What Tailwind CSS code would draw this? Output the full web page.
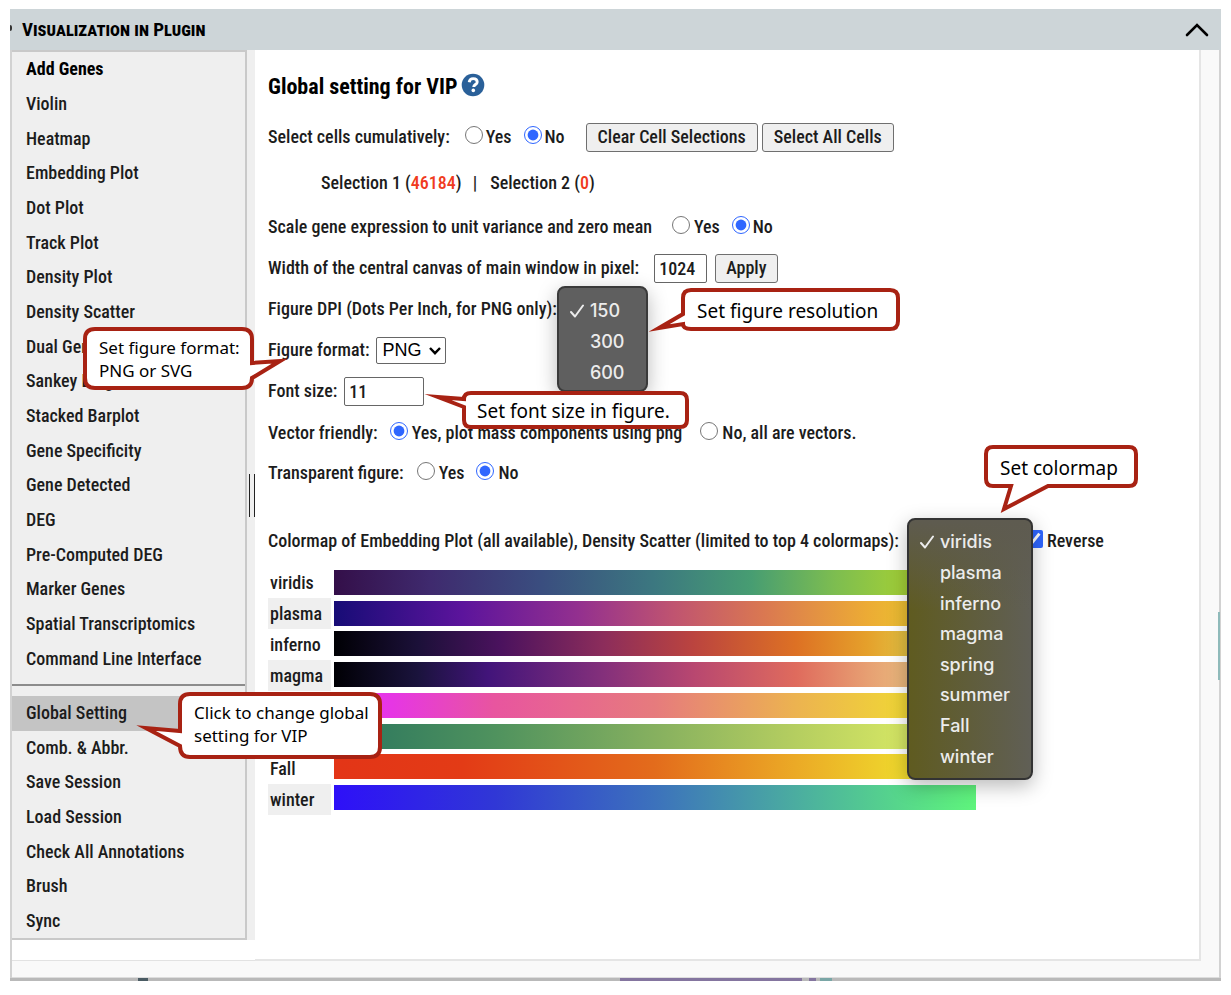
<!DOCTYPE html>
<html lang="en">
<head>
<meta charset="utf-8">
<title>Visualization in Plugin</title>
<script src="https://cdn.jsdelivr.net/npm/@tailwindcss/browser@4"></script>
</head>
<body class="bg-white text-[#1c1c1c] font-['Roboto_Condensed','Roboto',sans-serif] text-[18px] leading-6 font-medium">
<div class="relative px-[10px] pt-[9px] pb-3">
  <div class="border-x-2 border-[#d2d2d2]">
    <header class="-mx-[2px] flex h-[41px] items-center justify-between bg-[#cdd5d8] pr-3 pl-3">
      <h1 class="text-[19px] font-bold text-black [font-variant-caps:small-caps]">Visualization in Plugin</h1>
      <button type="button" aria-label="Collapse" class="h-6 w-6">
        <svg viewBox="0 0 24 24" class="h-6 w-6" fill="none" stroke="#000" stroke-width="2.600" stroke-linecap="round" stroke-linejoin="miter"><path d="M2 17 12 7 22 17"/></svg>
      </button>
    </header>
    <div class="flex bg-[#f9f9f9] pr-[18px]">
      <div class="w-[243px] shrink-0 border-b border-[#e2e2e2] bg-white pb-[20px]">
        <div class="flex bg-[#efefef]">
          <nav class="w-[235px] border-r-2 border-b-2 border-t-2 border-[#c9c9c9]">
            <div class="flex h-[624px] flex-col [&>a]:flex [&>a]:flex-1 [&>a]:items-center [&>a]:pl-[14px]">
              <a href="#" class="font-bold text-black">Add Genes</a>
              <a href="#">Violin</a>
              <a href="#">Heatmap</a>
              <a href="#">Embedding Plot</a>
              <a href="#">Dot Plot</a>
              <a href="#">Track Plot</a>
              <a href="#">Density Plot</a>
              <a href="#">Density Scatter</a>
              <a href="#">Dual Gene</a>
              <a href="#">Sankey Diagram</a>
              <a href="#">Stacked Barplot</a>
              <a href="#">Gene Specificity</a>
              <a href="#">Gene Detected</a>
              <a href="#">DEG</a>
              <a href="#">Pre-Computed DEG</a>
              <a href="#">Marker Genes</a>
              <a href="#">Spatial Transcriptomics</a>
              <a href="#">Command Line Interface</a>
            </div>
            <hr class="mt-2 mb-[10px] border-t-2 border-[#8c8c8c]">
            <div class="flex h-[242px] flex-col [&>a]:flex [&>a]:flex-1 [&>a]:items-center [&>a]:pl-[14px]">
              <a href="#" class="bg-[#c4c4c4]">Global Setting</a>
              <a href="#">Comb. &amp; Abbr.</a>
              <a href="#">Save Session</a>
              <a href="#">Load Session</a>
              <a href="#">Check All Annotations</a>
              <a href="#">Brush</a>
              <a href="#">Sync</a>
            </div>
          </nav>
          <div class="flex flex-1 items-center justify-end">
            <div class="h-[43px] w-[6px] border-x border-[#222]"></div>
          </div>
        </div>
      </div>
      <main class="min-w-0 flex-1 border-r-2 border-b-2 border-[#e5e5e5] bg-white pt-[17px] pl-[13px] whitespace-nowrap">
        <div class="flex h-10 items-center gap-1">
          <h2 class="text-[22px] font-bold text-black">Global setting for VIP</h2>
          <svg viewBox="0 0 24 24" class="mb-1 h-6 w-6" role="img" aria-label="Help"><circle cx="12" cy="12" r="11.300" fill="#2a6099"/><path d="M8.200 9.300c.3-2.400 1.900-3.700 4-3.700 2.300 0 4 1.300 4 3.300 0 2.500-3.500 2.700-3.500 5.200" fill="none" stroke="#fff" stroke-width="2.900"/><circle cx="12.300" cy="17.400" r="1.800" fill="#fff"/></svg>
        </div>
        <div class="flex h-[60px] items-center">
          <span>Select cells cumulatively:</span>
          <input id="c1" name="cum" type="radio" class="mb-1 ml-[15px] h-[18px] w-[18px] accent-[#2f66ff]"><label for="c1" class="ml-[3px]">Yes</label>
          <input id="c2" name="cum" type="radio" checked class="mb-1 ml-3 h-[18px] w-[18px] accent-[#2f66ff]"><label for="c2" class="ml-[3px]">No</label>
          <button type="button" class="ml-[21px] h-[29px] rounded-[3px] border border-[#6f6f6f] bg-[#efefef] px-[11px]">Clear Cell Selections</button>
          <button type="button" class="ml-1 h-[29px] rounded-[3px] border border-[#6f6f6f] bg-[#efefef] px-[11px]">Select All Cells</button>
        </div>
        <div class="flex h-8 items-center pl-[53px]">
          <span>Selection 1 (<span class="text-[#f03a20]">46184</span>)</span><span class="mx-[11px]">|</span><span class="ml-[2px]">Selection 2 (<span class="text-[#f03a20]">0</span>)</span>
        </div>
        <div class="mt-2 flex h-10 items-center">
          <span>Scale gene expression to unit variance and zero mean</span>
          <input id="s1" name="scale" type="radio" class="mb-1 ml-5 h-[18px] w-[18px] accent-[#2f66ff]"><label for="s1" class="ml-1">Yes</label>
          <input id="s2" name="scale" type="radio" checked class="mb-1 ml-3 h-[18px] w-[18px] accent-[#2f66ff]"><label for="s2" class="ml-[3px]">No</label>
        </div>
        <div class="flex h-[42px] items-center">
          <label for="w">Width of the central canvas of main window in pixel:</label>
          <input id="w" type="text" value="1024" class="ml-[15px] h-[29px] w-[53px] rounded-[2px] border border-[#666] bg-white px-1">
          <button type="button" class="ml-2 h-[29px] rounded-[3px] border border-[#6f6f6f] bg-[#efefef] px-[10px]">Apply</button>
        </div>
        <div class="flex h-10 items-center">
          <label for="dpi">Figure DPI (Dots Per Inch, for PNG only):</label>
          <div class="relative h-6">
            <select id="dpi" class="h-6 w-[70px] rounded-[2px] border border-[#666] bg-white"><option>150</option><option>300</option><option>600</option></select>
            <ul role="listbox" aria-label="Figure DPI" class="absolute -top-[11px] left-0 z-10 h-[106px] w-[91px] rounded-lg border-2 border-[#3a3a3a] bg-[#5f5f5f] pt-[7px] font-['Inter',sans-serif] text-[18px] leading-[31px] font-medium text-[#ececec] shadow-[0_6px_20px_rgba(0,0,0,0.28)]">
              <li role="option" aria-selected="true" class="flex items-center"><svg viewBox="0 0 14 14" class="ml-[11px] h-[14px] w-[14px]" fill="none" stroke="#ececec" stroke-width="2" stroke-linecap="round" stroke-linejoin="round"><path d="M1 8 5 12.500 13 1.500"/></svg><span class="ml-[6px]">150</span></li>
              <li role="option" class="pl-[31px]">300</li>
              <li role="option" class="pl-[31px]">600</li>
            </ul>
          </div>
        </div>
        <div class="flex h-[42px] items-center">
          <label for="fmt">Figure format:</label>
          <div class="relative ml-[6px]">
            <select id="fmt" class="block h-[27px] w-[70px] appearance-none rounded-[2px] border border-[#666] bg-white pl-[6px] font-['Liberation_Sans',sans-serif] text-[18px] leading-6 font-normal text-black"><option>PNG</option><option>SVG</option></select>
            <svg viewBox="0 0 12 8" class="pointer-events-none absolute top-[10px] right-[5px] h-2 w-3" fill="none" stroke="#000" stroke-width="2.400"><path d="M1 1 6 6.200 11 1"/></svg>
          </div>
        </div>
        <div class="flex h-10 items-center">
          <label for="fs">Font size:</label>
          <input id="fs" type="text" value="11" class="ml-[7px] h-[29px] w-[80px] rounded-[2px] border border-[#666] bg-white px-1">
        </div>
        <div class="flex h-[43px] items-center">
          <span>Vector friendly:</span>
          <input id="v1" name="vec" type="radio" checked class="mb-1 ml-3 h-[18px] w-[18px] accent-[#2f66ff]"><label for="v1" class="ml-1">Yes, plot mass components using png</label>
          <input id="v2" name="vec" type="radio" class="mb-1 ml-[18px] h-[18px] w-[18px] accent-[#2f66ff]"><label for="v2" class="ml-1">No, all are vectors.</label>
        </div>
        <div class="flex h-[38px] items-center">
          <span>Transparent figure:</span>
          <input id="t1" name="tr" type="radio" class="mb-1 ml-[13px] h-[18px] w-[18px] accent-[#2f66ff]"><label for="t1" class="ml-1">Yes</label>
          <input id="t2" name="tr" type="radio" checked class="mb-1 ml-3 h-[18px] w-[18px] accent-[#2f66ff]"><label for="t2" class="ml-1">No</label>
        </div>
        <div class="mt-[29px] flex h-10 items-center">
          <label for="cm">Colormap of Embedding Plot (all available), Density Scatter (limited to top 4 colormaps):</label>
          <div class="relative ml-2 h-6">
            <select id="cm" class="h-6 w-[110px] rounded-[2px] border border-[#666] bg-white"><option>viridis</option></select>
            <ul role="listbox" aria-label="Colormap" class="absolute -top-[11px] left-0 z-10 flex h-[262px] w-[126px] flex-col rounded-lg border-2 border-[#333] bg-[linear-gradient(to_bottom,#5e5b50,#5e5b5000_35%),linear-gradient(to_right,#5f5b20,#605f56)] pt-[7px] pb-[6px] font-['Inter',sans-serif] text-[18px] leading-[30px] font-medium text-[#ececec] shadow-[0_6px_20px_rgba(0,0,0,0.28)] [&>li]:flex [&>li]:flex-1 [&>li]:items-center">
              <li role="option" aria-selected="true"><svg viewBox="0 0 14 14" class="ml-[11px] h-[14px] w-[14px]" fill="none" stroke="#ececec" stroke-width="2" stroke-linecap="round" stroke-linejoin="round"><path d="M1 8 5 12.500 13 1.500"/></svg><span class="ml-[6px]">viridis</span></li>
              <li role="option" class="pl-[31px]">plasma</li>
              <li role="option" class="pl-[31px]">inferno</li>
              <li role="option" class="pl-[31px]">magma</li>
              <li role="option" class="pl-[31px]">spring</li>
              <li role="option" class="pl-[31px]">summer</li>
              <li role="option" class="pl-[31px]">Fall</li>
              <li role="option" class="pl-[31px]">winter</li>
            </ul>
          </div>
          <input id="rev" type="checkbox" checked class="mb-1 ml-2 h-[18px] w-[18px] accent-[#2f66ff]"><label for="rev" class="ml-1">Reverse</label>
        </div>
        <div class="mt-[6px] flex items-start gap-[3px]">
          <table class="w-[63px] border-collapse">
            <tr class="h-[31px]"><td class="pl-[2px]">viridis</td></tr>
            <tr class="h-[31px] bg-[#efefef]"><td class="pl-[2px]">plasma</td></tr>
            <tr class="h-[31px]"><td class="pl-[2px]">inferno</td></tr>
            <tr class="h-[31px] bg-[#efefef]"><td class="pl-[2px]">magma</td></tr>
            <tr class="h-[31px]"><td class="pl-[2px]">spring</td></tr>
            <tr class="h-[31px] bg-[#efefef]"><td class="pl-[2px]">summer</td></tr>
            <tr class="h-[31px]"><td class="pl-[2px]">Fall</td></tr>
            <tr class="h-[31px] bg-[#efefef]"><td class="pl-[2px]">winter</td></tr>
          </table>
          <div class="mt-[3px] flex h-[240px] w-[642px] flex-col justify-between [&>div]:h-[25px]">
            <div class="bg-[linear-gradient(to_right,#340f49,#3f2a6e_15%,#3a4d7f_32%,#3c7880_50%,#479d72_65%,#7dbd50_78%,#a2cf37_89%,#f5e52c)]"></div>
            <div class="bg-[linear-gradient(to_right,#170c76,#5c149c_20%,#93308f_38%,#c05470_53%,#da7851_67%,#ecab35_83%,#ebbd32_89%,#f0f030)]"></div>
            <div class="bg-[linear-gradient(to_right,#000004,#1b1038_13%,#4b125e_26%,#8c2d5b_42%,#bb443f_56%,#dd7124_72%,#e5a02b_83%,#e2bd40_89%,#fbffa0)]"></div>
            <div class="bg-[linear-gradient(to_right,#000004,#1a133c_13%,#42147a_24%,#84307b_42%,#b84770_56%,#df6b5d_72%,#e79f72_83%,#e9b77c_89%,#fbf9bb)]"></div>
            <div class="bg-[linear-gradient(to_right,#ea33f7,#e636e4_9%,#e8559f_25%,#e67b7d_50%,#ecb350_72%,#f0d636_89%,#fdfd33)]"></div>
            <div class="bg-[linear-gradient(to_right,#2a7a60,#377f5e_9%,#4f925e_25%,#86b05f_50%,#b5ce60_72%,#d5e664_89%,#fffd65)]"></div>
            <div class="bg-[linear-gradient(to_right,#e33517,#e33b16_20%,#e36c1c_50%,#ebaa26_72%,#efd92d_89%,#fffd38)]"></div>
            <div class="bg-[linear-gradient(to_right,#2e10f8,#3037d6_25%,#3c72bc_50%,#4db59c_75%,#5ff57c)]"></div>
          </div>
        </div>
      </main>
    </div>
    <div class="h-[17px] border-b border-[#ddd] bg-[#f9f9f9]"></div>
    <div class="-mx-[2px] flex h-[3px] bg-[#b9b9b9] pl-[128px]">
      <div class="h-full w-[10px] bg-[#4a5b63]"></div>
      <div class="ml-[472px] h-full w-[182px] bg-[#84759f]"></div>
      <div class="ml-[7px] h-full w-[7px] bg-[#84759f]"></div>
      <div class="ml-1 h-full w-3 bg-[#7aa6a6]"></div>
    </div>
  </div>

  <!-- Edges of page content behind the panel -->
  <div class="absolute top-[25px] left-[10px] h-[6px] w-[2px] rounded-r bg-[#333]"></div>
  <div class="absolute top-[612px] right-[11px] h-[68px] w-[2px] bg-[#8fbaba]"></div>

  <!-- Annotation callouts -->
  <div class="pointer-events-none absolute inset-0 z-20 font-['Noto_Sans',sans-serif] font-normal text-black">
    <svg class="absolute top-0 left-0 h-[995px] w-[1231px]" fill="#fff" stroke="#a82213" stroke-width="4" stroke-miterlimit="20">
      <path d="M691 290H890Q898 290 898 298V321Q898 329 890 329H691Q683 329 683 324L659 328L683 314V298Q683 290 691 290Z"/>
      <path d="M471 393H680Q687 393 687 400V420Q687 427 680 427H471Q464 427 464 420V407L438 397L464 399Q464 393 471 393Z"/>
      <path d="M95 329H242Q252 329 252 339V363L280 361L252 378Q252 388 242 388H95Q85 388 85 378V339Q85 329 95 329Z"/>
      <path d="M190 694H370Q380 694 380 704V747Q380 757 370 757H190Q180 757 180 746L146 728L180 731V704Q180 694 190 694Z"/>
      <path d="M993 447H1129Q1136 447 1136 454V479Q1136 486 1129 486H1048L1004 509L1011 486H993Q986 486 986 479V454Q986 447 993 447Z"/>
    </svg>
    <p class="absolute top-[299px] left-[697px] text-[19px]">Set figure resolution</p>
    <p class="absolute top-[399px] left-[477px] text-[19px]">Set font size in figure.</p>
    <p class="absolute top-[336px] left-[99px] text-[17px] leading-[23px]">Set figure format:<br>PNG or SVG</p>
    <p class="absolute top-[701px] left-[194px] text-[17px] leading-[23px]">Click to change global<br>setting for VIP</p>
    <p class="absolute top-[456px] left-[1000px] text-[19px]">Set colormap</p>
  </div>
</div>
</body>
</html>
